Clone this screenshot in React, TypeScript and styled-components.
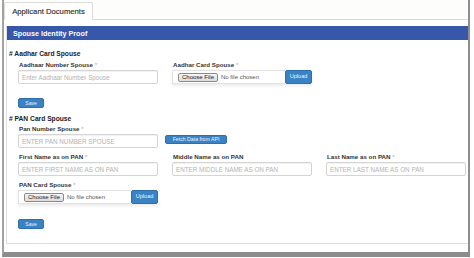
import React from "react";
import styled, { createGlobalStyle } from "styled-components";

const Global = createGlobalStyle`
  html, body { margin: 0; padding: 0; background: #fff; }
  body { font-family: "Liberation Sans", Arial, Helvetica, sans-serif; color: #333; }
  * { box-sizing: border-box; }
`;

const Frame = styled.div`
  margin-left: 2px;
  width: 468px;
  height: 257px;
  border-left: 2px solid #a3a3a3;
  border-right: 2px solid #8e8e8e;
  border-bottom: 5px solid #8c8c8c;
  background: #fff;
  display: flex;
  flex-direction: column;
`;

const TabBar = styled.div`
  display: flex;
  padding-top: 2px;
  border-bottom: 1px solid #dcdcdc;
  background: #fdfdfb;
`;

const Tab = styled.div`
  width: 89px;
  height: 18px;
  margin-bottom: -1px;
  border: 1px solid #dcdcdc;
  border-bottom: 1px solid #fff;
  background: #fff;
  border-radius: 2px 2px 0 0;
  display: flex;
  align-items: center;
  justify-content: center;
  font-size: 7.7px;
  color: #2e2e2e;
  -webkit-text-stroke: 0.15px #2e2e2e;
`;

const Content = styled.div`
  padding: 6px 0 0 2px;
`;

const Panel = styled.div`
  border: 1px solid #dedede;
  border-top: none;
  border-right: none;
`;

const PanelHeader = styled.div`
  height: 14px;
  background: #3757aa;
  color: #fff;
  font-weight: bold;
  font-size: 7.2px;
  display: flex;
  align-items: center;
  padding-left: 6px;
`;

const PanelBody = styled.div`
  padding: 10px 0 14px 2px;
  display: flex;
  flex-direction: column;
  align-items: flex-start;
`;

const SectionTitle = styled.div<{ $top?: number }>`
  font-weight: bold;
  font-size: 6.7px;
  line-height: 8px;
  color: #222;
  margin-top: ${(p) => p.$top ?? 0}px;
`;

const Grid = styled.div<{ $top?: number }>`
  display: grid;
  grid-template-columns: 140px 140px 139px;
  column-gap: 14px;
  margin: ${(p) => p.$top ?? 0}px 0 0 9px;
`;

const Field = styled.div`
  display: flex;
  flex-direction: column;
  gap: 1px;
`;

const Label = styled.label`
  display: block;
  font-weight: bold;
  font-size: 6.2px;
  line-height: 8px;
  height: 8px;
  color: #333;
  padding-left: 1px;
  white-space: nowrap;
`;

const Req = styled.span`
  color: #aaa;
  font-weight: normal;
`;

const Input = styled.input`
  display: block;
  flex: none;
  width: 140px;
  height: 14px;
  margin: 0;
  border: 1px solid #d4d4d4;
  border-radius: 2px;
  box-shadow: inset 0 1px 1px rgba(0, 0, 0, 0.06);
  padding: 0 3px;
  font-family: inherit;
  font-size: 6.3px;
  color: #555;
  outline: none;
  &::placeholder { color: #b3b3b3; }
`;

const ControlRow = styled.div`
  display: flex;
  align-items: flex-start;
  gap: 7px;
  width: max-content;
`;

const BlueButton = styled.button<{ $w: number; $h: number; $fs: number }>`
  display: flex;
  align-items: center;
  justify-content: center;
  flex: none;
  width: ${(p) => p.$w}px;
  height: ${(p) => p.$h}px;
  margin: 0;
  padding: 0;
  border: 1px solid #2f6fab;
  border-radius: 2px;
  background: #3a82c4;
  color: #eef4fb;
  font-family: inherit;
  font-size: ${(p) => p.$fs}px;
  line-height: 1;
  white-space: nowrap;
  cursor: pointer;
`;

const FetchButton = styled(BlueButton)`
  margin-top: 1px;
`;

const SaveRow = styled.div<{ $top: number }>`
  display: flex;
  margin: ${(p) => p.$top}px 0 0 9px;
`;

const FileGroup = styled.div`
  display: flex;
  width: 140px;
  height: 14px;
  box-shadow: 0 2px 3px rgba(0, 0, 0, 0.08);
`;

const FileBox = styled.div`
  flex: 1;
  display: flex;
  align-items: center;
  border: 1px solid #e2e2e2;
  border-right: none;
  background: #fff;
  padding-left: 5px;
  font-size: 6px;
  color: #555;
  white-space: nowrap;
  overflow: hidden;
`;

const ChooseButton = styled.span`
  display: inline-flex;
  align-items: center;
  justify-content: center;
  height: 9px;
  padding: 0 3px;
  border: 1px solid #8a8a8a;
  border-radius: 2px;
  background: linear-gradient(#f6f6f6, #dcdcdc);
  color: #222;
  font-size: 6px;
  margin-right: 3px;
`;

const FileInput: React.FC = () => (
  <FileGroup>
    <FileBox>
      <ChooseButton>Choose File</ChooseButton>
      No file chosen
    </FileBox>
    <BlueButton $w={27} $h={14} $fs={5.6} type="button">
      Upload
    </BlueButton>
  </FileGroup>
);

export default function App() {
  return (
    <>
      <Global />
      <Frame>
        <TabBar>
          <Tab>Applicant Documents</Tab>
        </TabBar>
        <Content>
          <Panel>
            <PanelHeader>Spouse Identity Proof</PanelHeader>
            <PanelBody>
              <SectionTitle># Aadhar Card Spouse</SectionTitle>
              <Grid $top={3}>
                <Field>
                  <Label>
                    Aadhaar Number Spouse <Req>*</Req>
                  </Label>
                  <Input placeholder="Enter Aadhaar Number Spouse" />
                </Field>
                <Field>
                  <Label>
                    Aadhar Card Spouse <Req>*</Req>
                  </Label>
                  <FileInput />
                </Field>
              </Grid>
              <SaveRow $top={14}>
                <BlueButton $w={26} $h={10} $fs={5} type="button">
                  Save
                </BlueButton>
              </SaveRow>

              <SectionTitle $top={7}># PAN Card Spouse</SectionTitle>
              <Grid $top={2}>
                <Field>
                  <Label>
                    Pan Number Spouse <Req>*</Req>
                  </Label>
                  <ControlRow>
                    <Input placeholder="ENTER PAN NUMBER SPOUSE" />
                    <FetchButton $w={62} $h={9} $fs={5.2} type="button">
                      Fetch Data from API
                    </FetchButton>
                  </ControlRow>
                </Field>
              </Grid>
              <Grid $top={5}>
                <Field>
                  <Label>
                    First Name as on PAN <Req>*</Req>
                  </Label>
                  <Input placeholder="ENTER FIRST NAME AS ON PAN" />
                </Field>
                <Field>
                  <Label>Middle Name as on PAN</Label>
                  <Input placeholder="ENTER MIDDLE NAME AS ON PAN" />
                </Field>
                <Field>
                  <Label>
                    Last Name as on PAN <Req>*</Req>
                  </Label>
                  <Input placeholder="ENTER LAST NAME AS ON PAN" />
                </Field>
              </Grid>
              <Grid $top={5}>
                <Field>
                  <Label>
                    PAN Card Spouse <Req>*</Req>
                  </Label>
                  <FileInput />
                </Field>
              </Grid>
              <SaveRow $top={15}>
                <BlueButton $w={26} $h={10} $fs={5} type="button">
                  Save
                </BlueButton>
              </SaveRow>
            </PanelBody>
          </Panel>
        </Content>
      </Frame>
    </>
  );
}
